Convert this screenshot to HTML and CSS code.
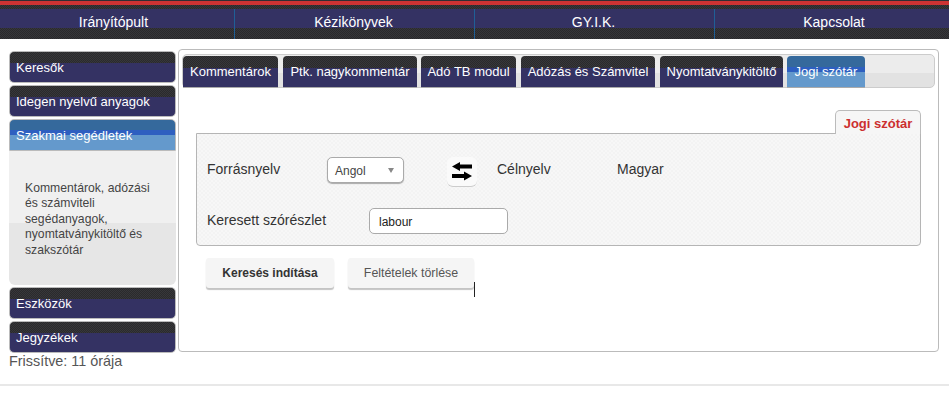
FILE: index.html
```html
<!DOCTYPE html>
<html lang="hu">
<head>
<meta charset="utf-8">
<title>Jogi szótár</title>
<link rel="stylesheet" href="styles.css">
</head>
<body>
<nav class="topnav">
  <a class="topnav-item">Irányítópult</a>
  <a class="topnav-item">Kézikönyvek</a>
  <a class="topnav-item">GY.I.K.</a>
  <a class="topnav-item">Kapcsolat</a>
</nav>
<div class="layout">
  <aside class="sidebar">
    <div class="acc">Keresők</div>
    <div class="acc">Idegen nyelvű anyagok</div>
    <div class="acc acc-active">Szakmai segédletek</div>
    <div class="acc-panel">Kommentárok, adózási és számviteli segédanyagok, nyomtatványkitöltő és szakszótár</div>
    <div class="acc">Eszközök</div>
    <div class="acc">Jegyzékek</div>
    <div class="updated">Frissítve: 11 órája</div>
  </aside>
  <main class="main">
    <div class="tabbar">
      <a class="tab tab-w1">Kommentárok</a>
      <a class="tab tab-w2">Ptk. nagykommentár</a>
      <a class="tab tab-w3">Adó TB modul</a>
      <a class="tab tab-w4">Adózás és Számvitel</a>
      <a class="tab tab-w5">Nyomtatványkitöltő</a>
      <a class="tab tab-w6 tab-active">Jogi szótár</a>
    </div>
    <div class="formtab-row"><span class="formtab">Jogi szótár</span></div>
    <section class="formbox">
      <div class="row row-lang">
        <span class="label">Forrásnyelv</span>
        <span class="select">Angol<i class="caret"></i></span>
        <span class="swap">
          <svg width="20" height="19" viewBox="0 0 20 19"><path d="M0 4.500 L8 0 V2.500 H20 V6.500 H8 V9 Z M20 14 L12 9.500 V12 H0 V16 H12 V18.500 Z" fill="#000"/></svg>
        </span>
        <span class="target-label">Célnyelv</span>
        <span class="target-value">Magyar</span>
      </div>
      <div class="row row-term">
        <span class="label">Keresett szórészlet</span>
        <span class="input">labour</span>
      </div>
    </section>
    <div class="actions">
      <a class="btn btn-primary">Keresés indítása</a>
      <a class="btn btn-secondary">Feltételek törlése</a>
      <i class="cursor"></i>
    </div>
  </main>
</div>
<div class="footer-line"></div>
</body>
</html>
```

FILE: styles.css
```css
* { box-sizing: border-box; }
html, body { margin: 0; padding: 0; }
body {
  width: 949px;
  height: 403px;
  overflow: hidden;
  background: #fff;
  font-family: "Liberation Sans", Arial, sans-serif;
  color: #333;
}
.topnav {
  height: 39px;
  margin-left: -5px;
  width: 960px;
  display: grid;
  grid-template-columns: repeat(4, 240px);
  padding-top: 9px;
  background:
    linear-gradient(#2f2f33 0 1px, #cc3333 1px 5px, transparent 5px),
    repeating-conic-gradient(#2a2a2c 0 25%, #37373a 0 50%) 0 0 / 2px 2px;
}
.topnav-item {
  height: 30px;
  padding: 5px 2px 0 0;
  font-size: 14px;
  line-height: 16px;
  text-align: center;
  color: #fff;
  border-right: 1px solid #1f5f96;
  background: linear-gradient(#343263 0 19px, transparent 19px);
}
.topnav-item:last-child { border-right: 0; }
.layout {
  display: flex;
  align-items: flex-start;
  margin-top: 10px;
  padding-left: 9px;
}
.sidebar {
  width: 167px;
  margin-right: 2px;
  padding-top: 2px;
}
.acc {
  height: 32px;
  margin-bottom: 2px;
  padding: 8px 0 0 6px;
  font-size: 13px;
  line-height: 16px;
  color: #fff;
  border: 1px solid #bbb;
  border-radius: 5px;
  background:
    linear-gradient(transparent 0 11px, #343263 11px),
    repeating-conic-gradient(#2a2a2c 0 25%, #37373a 0 50%) 0 0 / 2px 2px;
}
.acc-active {
  margin-bottom: 0;
  border-radius: 5px 5px 0 0;
  background: linear-gradient(#35699c 0 10px, #2e5fc0 10px 15px, #6499cc 15px);
}
.acc-panel {
  height: 134px;
  margin-bottom: 2px;
  padding: 30px 15px 0 16px;
  font-size: 12.200px;
  line-height: 15.400px;
  color: #444;
  border-radius: 0 0 6px 6px;
  background: linear-gradient(#f0f0f0 0 72px, #e6e6e6 72px);
}
.updated {
  margin-top: -3px;
  font-size: 14.400px;
  line-height: 18px;
  color: #555;
}
.main {
  position: relative;
  width: 761px;
  height: 303px;
  padding: 4px 3px 0;
  border: 1px solid #bbb;
  border-radius: 4px;
}
.tabbar {
  display: flex;
  height: 34px;
  padding: 1px 0 0;
  gap: 5px;
  border: 1px solid #ccc;
  border-radius: 5px;
  background: linear-gradient(#ececec 0 18px, #e2e2e2 18px);
}
.tab {
  height: 31px;
  padding-top: 8px;
  font-size: 13px;
  line-height: 16px;
  text-align: center;
  color: #fff;
  border-radius: 4px 4px 0 0;
  background:
    linear-gradient(transparent 0 12px, #343263 12px),
    repeating-conic-gradient(#2a2a2c 0 25%, #37373a 0 50%) 0 0 / 2px 2px;
  box-shadow: 0 1px 0 #aaa;
  white-space: nowrap;
}
.tab-w1 { width: 95px; }
.tab-w2 { width: 134px; }
.tab-w3 { width: 95px; margin-left: -1px; }
.tab-w4 { width: 134px; }
.tab-w5 { width: 123px; }
.tab-w6 { width: 78px; margin-left: -1px; }
.tab-active { background: linear-gradient(#35699c 0 11px, #2e5fc0 11px 16px, #6499cc 16px); }
.formtab-row {
  display: flex;
  justify-content: flex-end;
  align-items: flex-start;
  height: 23px;
  margin-top: 22px;
  padding-right: 14px;
}
.formtab {
  width: 86px;
  height: 24px;
  padding-top: 5px;
  font-size: 13px;
  font-weight: bold;
  line-height: 15px;
  text-align: center;
  color: #cc2f2f;
  background: #f6f6f6;
  border: 1px solid #bbb;
  border-bottom: 0;
  border-radius: 5px 5px 0 0;
  position: relative;
  z-index: 1;
}
.formbox {
  width: 725px;
  height: 113px;
  margin-left: 14px;
  border: 1px solid #b5b5b5;
  border-radius: 0 0 4px 4px;
  background: repeating-conic-gradient(#f3f3f3 0 25%, #f7f7f7 0 50%) 0 0 / 4px 4px;
}
.row {
  display: flex;
  align-items: center;
  color: #333;
  font-size: 14px;
}
.row-lang { height: 26px; margin-top: 23px; padding-left: 10px; }
.row-term { height: 26px; margin-top: 25px; padding-left: 10px; }
.row-lang .label { width: 120px; margin-bottom: 2px; }
.row-term .label { width: 162px; margin-bottom: 2px; }
.select {
  position: relative;
  width: 77px;
  height: 26px;
  padding: 6px 0 0 7px;
  font-size: 12px;
  line-height: 14px;
  color: #444;
  background: #fff;
  border: 1px solid #aaa;
  border-radius: 5px;
  box-shadow: 0 1px 1px #aaa;
}
.caret {
  position: absolute;
  right: 9px;
  top: 10px;
  border-left: 3.500px solid transparent;
  border-right: 3.500px solid transparent;
  border-top: 5px solid #888;
}
.swap {
  flex: none;
  width: 30px;
  height: 30px;
  margin: 4px 20px 0 43px;
  display: flex;
  align-items: center;
  justify-content: center;
  border-radius: 6px;
  border-bottom: 1px solid #ccc;
  background: #fafafa;
}
.target-label { width: 120px; margin-bottom: 2px; }
.target-value { margin-bottom: 2px; }
.input {
  width: 139px;
  height: 26px;
  padding: 6px 0 0 9px;
  font-size: 12px;
  line-height: 14px;
  color: #222;
  background: #fff;
  border: 1px solid #aaa;
  border-radius: 5px;
}
.actions {
  display: flex;
  position: relative;
  gap: 14px;
  margin-top: 12px;
  padding-left: 24px;
}
.btn {
  height: 30px;
  padding-top: 8px;
  font-size: 12px;
  line-height: 15px;
  text-align: center;
  background: #f5f5f5;
  border-radius: 3px;
  box-shadow: 0 2px 1px #c4c4c4;
}
.btn-primary { width: 128px; font-weight: bold; color: #333; }
.btn-secondary { width: 126px; font-size: 12.400px; color: #555; }
.cursor {
  position: absolute;
  left: 292px;
  top: 24px;
  width: 1px;
  height: 15px;
  background: #222;
}
.footer-line {
  height: 2px;
  margin-top: 14px;
  background: #e8e8e8;
}
```
